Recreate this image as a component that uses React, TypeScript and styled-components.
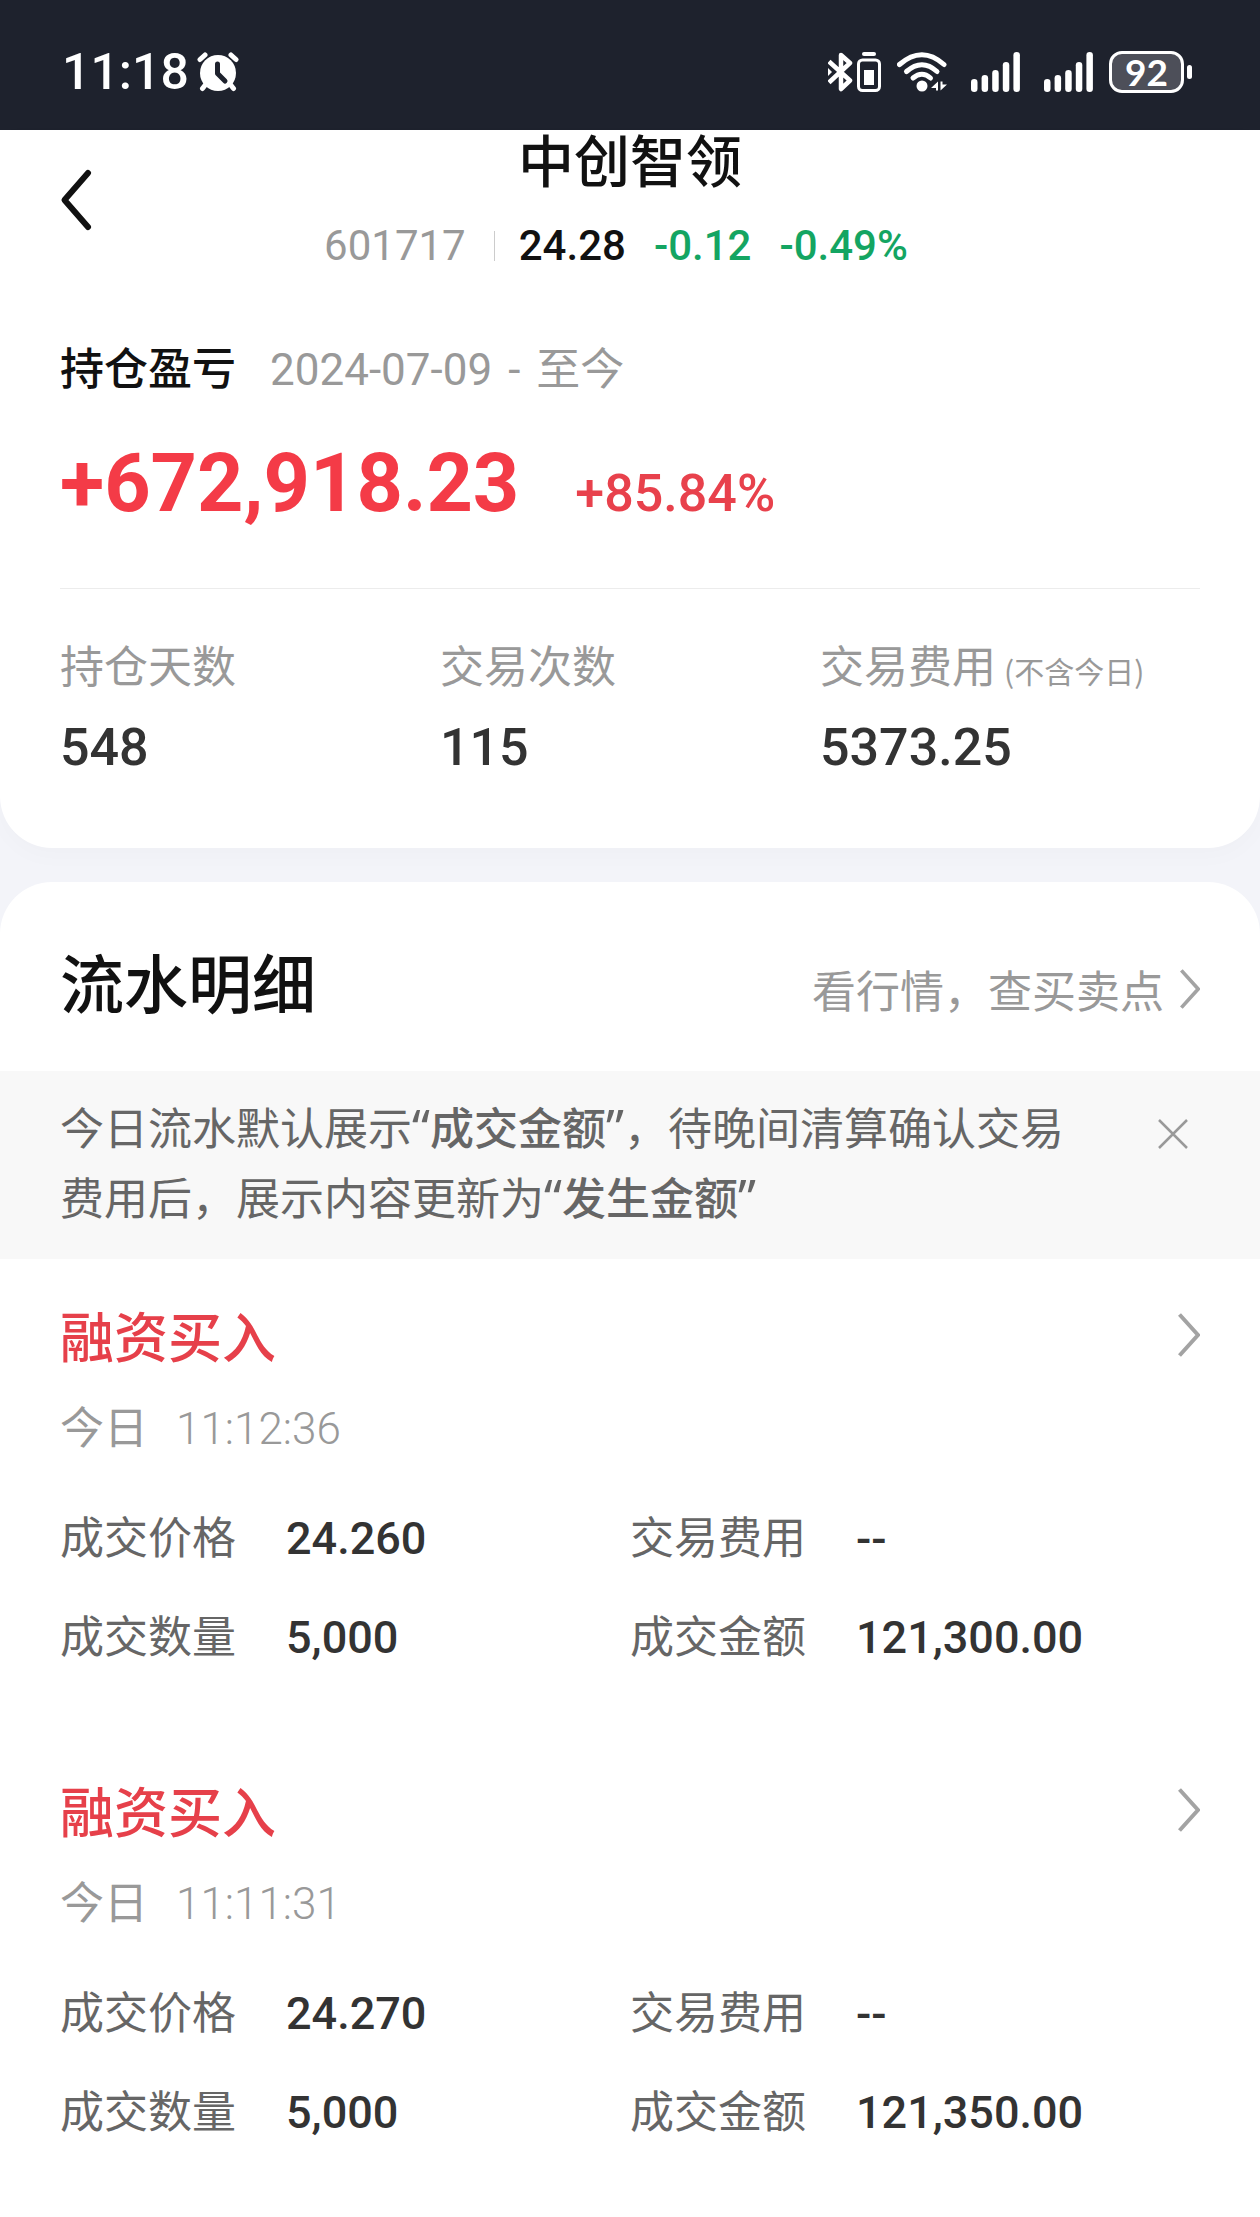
import React, { useState } from "react";
import styled, { createGlobalStyle } from "styled-components";

const cjk = `"Noto Sans CJK SC", sans-serif`;
const numeric = `Roboto, "Noto Sans CJK SC", sans-serif`;

const GlobalStyle = createGlobalStyle`
  *, *::before, *::after { box-sizing: border-box; }
  body { margin: 0; background: #f3f4f9; font-family: ${cjk}; color: #111; }
  h1, h2, h3, p, dl, dd, dt { margin: 0; font-size: inherit; font-weight: inherit; }
  button { border: 0; padding: 0; background: none; color: inherit; cursor: pointer; }
  a { color: inherit; text-decoration: none; }
  svg { display: block; flex: none; }
`;

const Page = styled.div`
  display: flex;
  flex-direction: column;
  min-height: 100vh;
`;

const StatusBar = styled.div`
  display: flex;
  align-items: center;
  justify-content: space-between;
  height: 130px;
  padding: 14px 68px 0 62px;
  background: #1e222d;
  color: #fff;
`;

const Clock = styled.div`
  display: flex;
  align-items: center;
  gap: 8px;
  font: 500 50px/60px Roboto, sans-serif;
`;

const StatusIcons = styled.div`
  display: flex;
  align-items: center;
  gap: 24px;
`;

const IconGroup = styled.div<{ $gap: number }>`
  display: flex;
  align-items: center;
  gap: ${(p) => p.$gap}px;
`;

const Battery = styled.div`
  display: flex;
  align-items: center;
  gap: 3px;
`;

const BatteryBody = styled.div`
  display: flex;
  align-items: center;
  justify-content: center;
  width: 75px;
  height: 42px;
  border: 3px solid #fff;
  border-radius: 13px;
  background: #4d4f59;
  font: 700 37px/36px Lato, sans-serif;
`;

const BatteryTip = styled.div`
  width: 5px;
  height: 14px;
  border-radius: 3px;
  background: #fff;
`;

const Card = styled.section`
  background: #fff;
`;

const SummaryCard = styled(Card)`
  border-radius: 0 0 52px 52px;
  padding-bottom: 70px;
  box-shadow: 0 8px 24px rgba(0, 0, 0, 0.02);
`;

const Header = styled.header`
  display: grid;
  grid-template-columns: 1fr auto 1fr;
  align-items: center;
  padding: 0 60px;
`;

const BackButton = styled.button`
  justify-self: start;
`;

const Titles = styled.div`
  display: flex;
  flex-direction: column;
  align-items: center;
  gap: 36px;
`;

const StockName = styled.h1`
  font-size: 56px;
  line-height: 56px;
  font-weight: 500;
`;

const Quote = styled.div`
  display: flex;
  align-items: center;
  font: 500 42px/48px ${numeric};
`;

const QuoteItem = styled.span<{ $color: string; $light?: boolean }>`
  margin-right: 28px;
  color: ${(p) => p.$color};
  font-weight: ${(p) => (p.$light ? 400 : 500)};
`;

const QuoteRule = styled.span`
  width: 1px;
  height: 30px;
  margin-right: 24px;
  background: #ccc;
`;

const Profit = styled.div`
  margin: 66px 60px 0;
  padding-bottom: 62px;
  border-bottom: 1px solid #ececec;
`;

const Caption = styled.div<{ $gap: number }>`
  display: flex;
  align-items: baseline;
  gap: ${(p) => p.$gap}px;
  font-size: 44px;
  line-height: 60px;
  color: #999;
`;

const CaptionTitle = styled.h2`
  font-weight: 500;
  color: #111;
`;

const Numbers = styled.span<{ $weight: number }>`
  font-family: ${numeric};
  font-weight: ${(p) => p.$weight};
  line-height: 1;
`;

const ProfitValue = styled.p`
  display: flex;
  align-items: baseline;
  gap: 56px;
  margin-top: 46px;
  font: 700 81px/84px ${numeric};
  color: #f43b47;
`;

const ProfitRate = styled.span`
  font-size: 52px;
  line-height: 1;
  font-weight: 500;
  color: #e8414c;
`;

const Stats = styled.dl`
  display: grid;
  grid-template-columns: repeat(3, 1fr);
  padding: 45px 60px 0;
`;

const StatLabel = styled.dt`
  font-size: 44px;
  line-height: 60px;
  color: #999;
  white-space: nowrap;
`;

const StatNote = styled.small`
  margin-left: 8px;
  font-size: 30px;
  line-height: 1;
`;

const StatValue = styled.dd`
  margin-top: 24px;
  font: 500 52px/60px ${numeric};
  color: #333;
`;

const FlowCard = styled(Card)`
  position: relative;
  flex: 1;
  margin-top: 34px;
  border-radius: 52px 52px 0 0;
`;

const FlowHead = styled.div`
  display: flex;
  align-items: baseline;
  justify-content: space-between;
  padding: 58px 60px 51px;
`;

const FlowTitle = styled.h2`
  font-size: 64px;
  line-height: 80px;
  font-weight: 500;
`;

const FlowLink = styled.a`
  display: flex;
  align-items: center;
  gap: 16px;
  font-size: 44px;
  line-height: 60px;
  color: #999;
`;

const Notice = styled.div`
  display: flex;
  align-items: flex-start;
  justify-content: space-between;
  padding: 20px 60px 28px;
  background: #f8f8f8;
`;

const NoticeText = styled.p`
  max-width: 1020px;
  font-size: 44px;
  line-height: 70px;
  color: #666;

  strong { font-weight: 500; }
`;

const QuoteMark = styled.span`
  font-family: "Noto Sans", sans-serif;
  font-size: 50px;
  line-height: 1;
`;

const CloseButton = styled.button`
  padding: 28px 12px;
`;

const Trade = styled.article`
  padding: 38px 60px 70px;
`;

const TradeHead = styled.div`
  display: flex;
  align-items: center;
  justify-content: space-between;
  margin-bottom: 22px;
`;

const TradeTitle = styled.h3`
  font-size: 54px;
  line-height: 76px;
  font-weight: 500;
  color: #e6404a;
`;

const Details = styled.dl`
  display: grid;
  grid-template-columns: repeat(2, 1fr);
  row-gap: 39px;
  margin-top: 50px;
`;

const Detail = styled.div`
  display: flex;
  align-items: baseline;
  gap: 50px;
`;

const DetailLabel = styled.dt`
  font-size: 44px;
  line-height: 60px;
  color: #666;
`;

const DetailValue = styled.dd`
  font: 500 45px/45px ${numeric};
  color: #333;
`;

const AlarmIcon = () => (
  <svg width="42" height="40" viewBox="0 0 42 40" aria-hidden="true">
    <g stroke="#fff" strokeWidth="5" strokeLinecap="round" fill="none">
      <path d="M3 7.5 L8 3" />
      <path d="M34 3 L39 7.5" />
      <path d="M9 32 L5.500 36.500" />
      <path d="M33 32 L36.500 36.500" />
    </g>
    <circle cx="21" cy="21" r="18" fill="#fff" />
    <path d="M20.500 12 V21.500 L28 29" stroke="#1e222d" strokeWidth="5" strokeLinecap="round" strokeLinejoin="round" fill="none" />
  </svg>
);

const BluetoothIcon = () => (
  <svg width="25" height="40" viewBox="0 0 25 40" aria-hidden="true">
    <path d="M1 9.500 L22 28.500 L13 37 V3 L22 11 L1 30.500" stroke="#fff" strokeWidth="4.500" strokeLinejoin="round" fill="none" />
    <path d="M0 16 L4 20 L0 24 Z" fill="#fff" />
  </svg>
);

const DeviceBatteryIcon = () => (
  <svg width="24" height="40" viewBox="0 0 24 40" aria-hidden="true">
    <rect x="5" y="0" width="14" height="4" rx="2" fill="#fff" />
    <rect x="1.500" y="8" width="21" height="30.500" rx="4" stroke="#fff" strokeWidth="3" fill="none" />
    <rect x="7" y="18" width="10" height="15" fill="#fff" />
  </svg>
);

const WifiIcon = () => (
  <svg width="50" height="40" viewBox="0 0 50 40" aria-hidden="true">
    <g stroke="#fff" strokeWidth="5" strokeLinecap="round" fill="none">
      <path d="M2.500 12.500 Q25 -7 47 12.500" />
      <path d="M9.500 19.500 Q25 6 40 19.500" />
      <path d="M16 26 Q25 18.500 33.500 26" />
    </g>
    <circle cx="25" cy="34" r="5.500" fill="#fff" />
    <path d="M41 29.500 V38.500 H39 V36 H34 Z M43.500 38.500 V29.500 H45.500 V32.500 H50 Z" fill="#fff" />
  </svg>
);

const SignalIcon = () => (
  <svg width="49" height="40" viewBox="0 0 49 40" aria-hidden="true">
    {[13, 17, 22, 30, 40].map((height, i) => (
      <rect key={height} x={i * 10.6} y={40 - height} width="6.500" height={height} rx="3.200" fill="#fff" />
    ))}
  </svg>
);

const BackIcon = () => (
  <svg width="34" height="64" viewBox="0 0 34 64" aria-hidden="true">
    <path d="M28 5 L4.500 32 L28 59" stroke="#111" strokeWidth="6" strokeLinecap="round" strokeLinejoin="round" fill="none" />
  </svg>
);

const Chevron = ({ height }: { height: number }) => (
  <svg width={height / 2} height={height} viewBox="0 0 22 44" aria-hidden="true">
    <path d="M1.500 1.500 L20 22 L1.500 42.500" stroke="#a3a3a3" strokeWidth="4" fill="none" />
  </svg>
);

const CloseIcon = () => (
  <svg width="30" height="30" viewBox="0 0 30 30" aria-hidden="true">
    <path d="M1 1 L29 29 M29 1 L1 29" stroke="#999" strokeWidth="2.500" fill="none" />
  </svg>
);

const stats = [
  { label: "持仓天数", value: "548" },
  { label: "交易次数", value: "115" },
  { label: "交易费用", note: "(不含今日)", value: "5373.25" },
];

const trades = [
  { time: "11:12:36", price: "24.260", amount: "121,300.00" },
  { time: "11:11:31", price: "24.270", amount: "121,350.00" },
];

export default function App() {
  const [noticeOpen, setNoticeOpen] = useState(true);

  return (
    <>
      <GlobalStyle />
      <Page>
        <StatusBar>
          <Clock>
            11:18
            <AlarmIcon />
          </Clock>
          <StatusIcons>
            <IconGroup $gap={16}>
              <IconGroup $gap={4}>
                <BluetoothIcon />
                <DeviceBatteryIcon />
              </IconGroup>
              <WifiIcon />
            </IconGroup>
            <SignalIcon />
            <IconGroup $gap={16}>
              <SignalIcon />
              <Battery>
                <BatteryBody>92</BatteryBody>
                <BatteryTip />
              </Battery>
            </IconGroup>
          </StatusIcons>
        </StatusBar>

        <SummaryCard>
          <Header>
            <BackButton type="button" aria-label="返回">
              <BackIcon />
            </BackButton>
            <Titles>
              <StockName>中创智领</StockName>
              <Quote>
                <QuoteItem $color="#999" $light>601717</QuoteItem>
                <QuoteRule />
                <QuoteItem $color="#111">24.28</QuoteItem>
                <QuoteItem $color="#14a562">-0.12</QuoteItem>
                <QuoteItem $color="#14a562">-0.49%</QuoteItem>
              </Quote>
            </Titles>
          </Header>

          <Profit>
            <Caption $gap={34}>
              <CaptionTitle>持仓盈亏</CaptionTitle>
              <Caption $gap={16}>
                <Numbers as="time" $weight={400}>2024-07-09</Numbers>
                <Numbers $weight={400}>-</Numbers>
                <span>至今</span>
              </Caption>
            </Caption>
            <ProfitValue>
              +672,918.23
              <ProfitRate>+85.84%</ProfitRate>
            </ProfitValue>
          </Profit>

          <Stats>
            {stats.map((s) => (
              <div key={s.label}>
                <StatLabel>
                  {s.label}
                  {s.note && <StatNote>{s.note}</StatNote>}
                </StatLabel>
                <StatValue>{s.value}</StatValue>
              </div>
            ))}
          </Stats>
        </SummaryCard>

        <FlowCard>
          <FlowHead>
            <FlowTitle>流水明细</FlowTitle>
            <FlowLink href="#quotes">
              看行情，查买卖点
              <Chevron height={40} />
            </FlowLink>
          </FlowHead>

          {noticeOpen && (
            <Notice>
              <NoticeText>
                今日流水默认展示<QuoteMark>“</QuoteMark>
                <strong>成交金额</strong>
                <QuoteMark>”</QuoteMark>，待晚间清算确认交易费用后，展示内容更新为
                <QuoteMark>“</QuoteMark>
                <strong>发生金额</strong>
                <QuoteMark>”</QuoteMark>
              </NoticeText>
              <CloseButton type="button" aria-label="关闭" onClick={() => setNoticeOpen(false)}>
                <CloseIcon />
              </CloseButton>
            </Notice>
          )}

          {trades.map((t) => (
            <Trade key={t.time}>
              <TradeHead>
                <TradeTitle>融资买入</TradeTitle>
                <button type="button" aria-label="查看详情">
                  <Chevron height={44} />
                </button>
              </TradeHead>
              <Caption $gap={28}>
                <span>今日</span>
                <Numbers as="time" $weight={300}>{t.time}</Numbers>
              </Caption>
              <Details>
                <Detail>
                  <DetailLabel>成交价格</DetailLabel>
                  <DetailValue>{t.price}</DetailValue>
                </Detail>
                <Detail>
                  <DetailLabel>交易费用</DetailLabel>
                  <DetailValue>--</DetailValue>
                </Detail>
                <Detail>
                  <DetailLabel>成交数量</DetailLabel>
                  <DetailValue>5,000</DetailValue>
                </Detail>
                <Detail>
                  <DetailLabel>成交金额</DetailLabel>
                  <DetailValue>{t.amount}</DetailValue>
                </Detail>
              </Details>
            </Trade>
          ))}
        </FlowCard>
      </Page>
    </>
  );
}
